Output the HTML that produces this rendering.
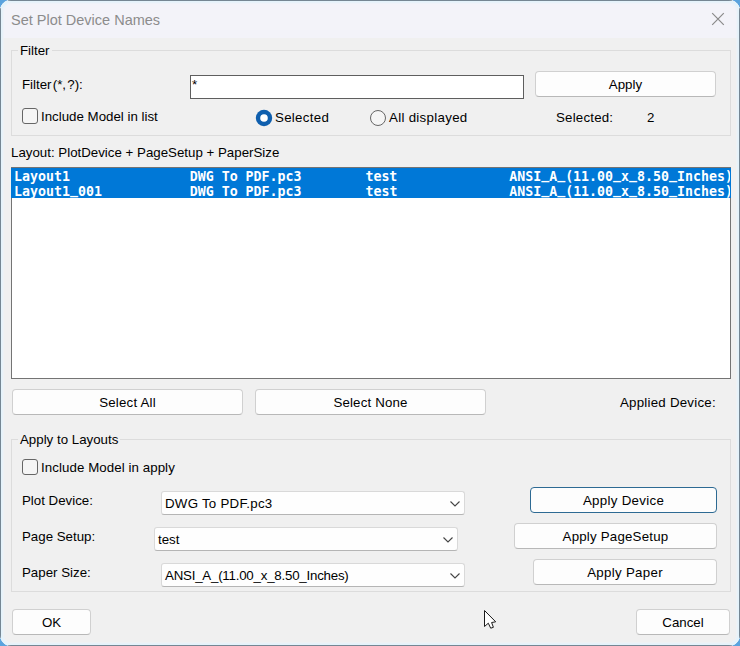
<!DOCTYPE html>
<html>
<head>
<meta charset="utf-8">
<title>Set Plot Device Names</title>
<style>
html,body{margin:0;padding:0;}
body{width:740px;height:646px;overflow:hidden;background:#5aa3de;font-family:"Liberation Sans",sans-serif;font-size:13.3px;color:#000;position:relative;}
#win{position:absolute;left:0;top:0;width:740px;height:646px;border-radius:11px;background:#f0f0f0;overflow:hidden;}
#hl{position:absolute;left:0;top:0;width:740px;height:646px;border-radius:11px;box-shadow:inset 0 0 0 2px #e4f3fb, inset 0 0 0 3px rgba(230,241,250,.8), inset 0 0 0 4px rgba(236,243,249,.5);pointer-events:none;}
.edge{position:absolute;background:#758693;}
#tb{position:absolute;left:0;top:0;width:740px;height:38px;background:#f3f3f9;}
#title{position:absolute;left:11px;top:12px;font-size:14.5px;color:#8c8c8c;white-space:pre;line-height:17px;}
.abs{position:absolute;white-space:pre;line-height:16px;}
.grp{position:absolute;border:1px solid #dcdcdc;box-sizing:border-box;}
.grp>span{position:absolute;left:6px;top:-8px;background:#f0f0f0;padding:0 2px;line-height:16px;white-space:pre;}
.btn{position:absolute;box-sizing:border-box;height:26px;line-height:26px;border:1px solid #d0d0d0;border-bottom-color:#b8b8b8;border-radius:4px;background:#fdfdfd;text-align:center;white-space:pre;}
.chk{position:absolute;box-sizing:border-box;width:16px;height:16px;border:1px solid #666;border-radius:3px;background:#f5f5f5;}
.combo{position:absolute;box-sizing:border-box;width:304px;height:24px;line-height:24px;padding-left:3px;border:1px solid #d9d9d9;border-bottom-color:#b5b5b5;border-radius:3px;background:#fefefe;white-space:pre;}
.combo svg{position:absolute;right:4px;top:9px;}
#list{position:absolute;left:11px;top:167px;width:718px;height:210px;border:1px solid #747474;background:#fff;}
#sel{position:absolute;left:-1px;top:0;width:720px;height:30px;background:#0078d7;}
.row{position:absolute;left:2px;width:716px;height:17px;color:#fff;font-family:"DejaVu Sans Mono","Liberation Mono",monospace;font-weight:bold;font-size:13.289px;line-height:17px;white-space:pre;overflow:hidden;}
.row u{text-decoration:none;position:relative;top:-2px;}
</style>
</head>
<body>
<div id="win">
  <div id="tb"></div>
  <div id="title">Set Plot Device Names</div>
  <svg style="position:absolute;left:711px;top:12px" width="14" height="14" viewBox="0 0 14 14"><path d="M1.2 1.2 L12.8 12.8 M12.8 1.2 L1.2 12.8" stroke="#8a8a8a" stroke-width="1.2" fill="none"/></svg>

  <div class="grp" style="left:11px;top:50px;width:720px;height:86px;"><span>Filter</span></div>
  <div class="abs" style="left:22px;top:77px;word-spacing:-2.5px;">Filter (*, ?):</div>
  <div class="abs" style="left:190px;top:75px;width:334px;height:24px;box-sizing:border-box;border:1px solid #5e5e5e;background:#fff;padding-left:1px;line-height:18px;">*</div>
  <div class="btn" style="left:535px;top:71px;width:181px;">Apply</div>
  <div class="chk" style="left:22px;top:108px;"></div>
  <div class="abs" style="left:41px;top:109px;">Include Model in list</div>
  <svg style="position:absolute;left:254px;top:108px" width="20" height="20" viewBox="0 0 20 20"><circle cx="10" cy="10" r="8.2" fill="#0f5fae"/><circle cx="10" cy="10" r="3.8" fill="#fff"/></svg>
  <div class="abs" style="left:275px;top:110px;letter-spacing:0.3px;">Selected</div>
  <div style="position:absolute;left:370px;top:110px;width:16px;height:16px;box-sizing:border-box;border:1px solid #666;border-radius:50%;background:#f5f5f5;"></div>
  <div class="abs" style="left:389px;top:110px;letter-spacing:0.3px;">All displayed</div>
  <div class="abs" style="left:556px;top:110px;letter-spacing:0.2px;">Selected:</div>
  <div class="abs" style="left:647px;top:110px;">2</div>

  <div class="abs" style="left:11px;top:145px;">Layout: PlotDevice + PageSetup + PaperSize</div>
  <div id="list">
    <div id="sel"></div>
    <div class="row" style="top:0;">Layout1               DWG To PDF.pc3        test              ANSI<u>_</u>A<u>_</u>(11.00<u>_</u>x<u>_</u>8.50<u>_</u>Inches)</div>
    <div class="row" style="top:15px;">Layout1<u>_</u>001           DWG To PDF.pc3        test              ANSI<u>_</u>A<u>_</u>(11.00<u>_</u>x<u>_</u>8.50<u>_</u>Inches)</div>
  </div>

  <div class="btn" style="left:12px;top:389px;width:231px;letter-spacing:0.2px;">Select All</div>
  <div class="btn" style="left:255px;top:389px;width:231px;letter-spacing:0.15px;">Select None</div>
  <div class="abs" style="left:620px;top:395px;letter-spacing:0.23px;">Applied Device:</div>

  <div class="grp" style="left:11px;top:439px;width:720px;height:153px;"><span>Apply to Layouts</span></div>
  <div class="chk" style="left:22px;top:459px;"></div>
  <div class="abs" style="left:41px;top:460px;letter-spacing:0.07px;">Include Model in apply</div>

  <div class="abs" style="left:22px;top:493px;">Plot Device:</div>
  <div class="combo" style="left:161px;top:491px;letter-spacing:0.25px;">DWG To PDF.pc3<svg width="10" height="6" viewBox="0 0 10 6"><path d="M0.5 0.5 L5 5 L9.5 0.5" stroke="#444" stroke-width="1.1" fill="none"/></svg></div>
  <div class="abs" style="left:22px;top:529px;">Page Setup:</div>
  <div class="combo" style="left:154px;top:527px;">test<svg width="10" height="6" viewBox="0 0 10 6"><path d="M0.5 0.5 L5 5 L9.5 0.5" stroke="#444" stroke-width="1.1" fill="none"/></svg></div>
  <div class="abs" style="left:22px;top:565px;">Paper Size:</div>
  <div class="combo" style="left:161px;top:563px;letter-spacing:-0.22px;">ANSI_A_(11.00_x_8.50_Inches)<svg width="10" height="6" viewBox="0 0 10 6"><path d="M0.5 0.5 L5 5 L9.5 0.5" stroke="#444" stroke-width="1.1" fill="none"/></svg></div>

  <div class="btn" style="left:530px;top:487px;width:187px;border-color:#2d6a93;letter-spacing:0.3px;">Apply Device</div>
  <div class="btn" style="left:514px;top:523px;width:203px;letter-spacing:0.2px;">Apply PageSetup</div>
  <div class="btn" style="left:533px;top:559px;width:184px;letter-spacing:0.3px;">Apply Paper</div>

  <div class="btn" style="left:12px;top:609px;width:79px;">OK</div>
  <div class="btn" style="left:636px;top:609px;width:94px;">Cancel</div>

  <svg style="position:absolute;left:480px;top:606px" width="20" height="26" viewBox="0 0 20 26"><path d="M4.5 4.5 L4.5 20.5 L8.3 17.2 L10.7 22.2 L13.4 21.3 L11.6 16.5 L15.7 15.8 Z" fill="#fff" stroke="#1a1a1a" stroke-width="1" stroke-linejoin="round"/></svg>
  <div id="hl"></div>
  <div class="edge" style="left:8px;top:0;width:724px;height:1px;"></div>
  <div class="edge" style="left:8px;top:645px;width:724px;height:1px;"></div>
  <div class="edge" style="left:0;top:8px;width:1px;height:630px;"></div>
  <div class="edge" style="left:739px;top:8px;width:1px;height:630px;"></div>
</div>
</body>
</html>
